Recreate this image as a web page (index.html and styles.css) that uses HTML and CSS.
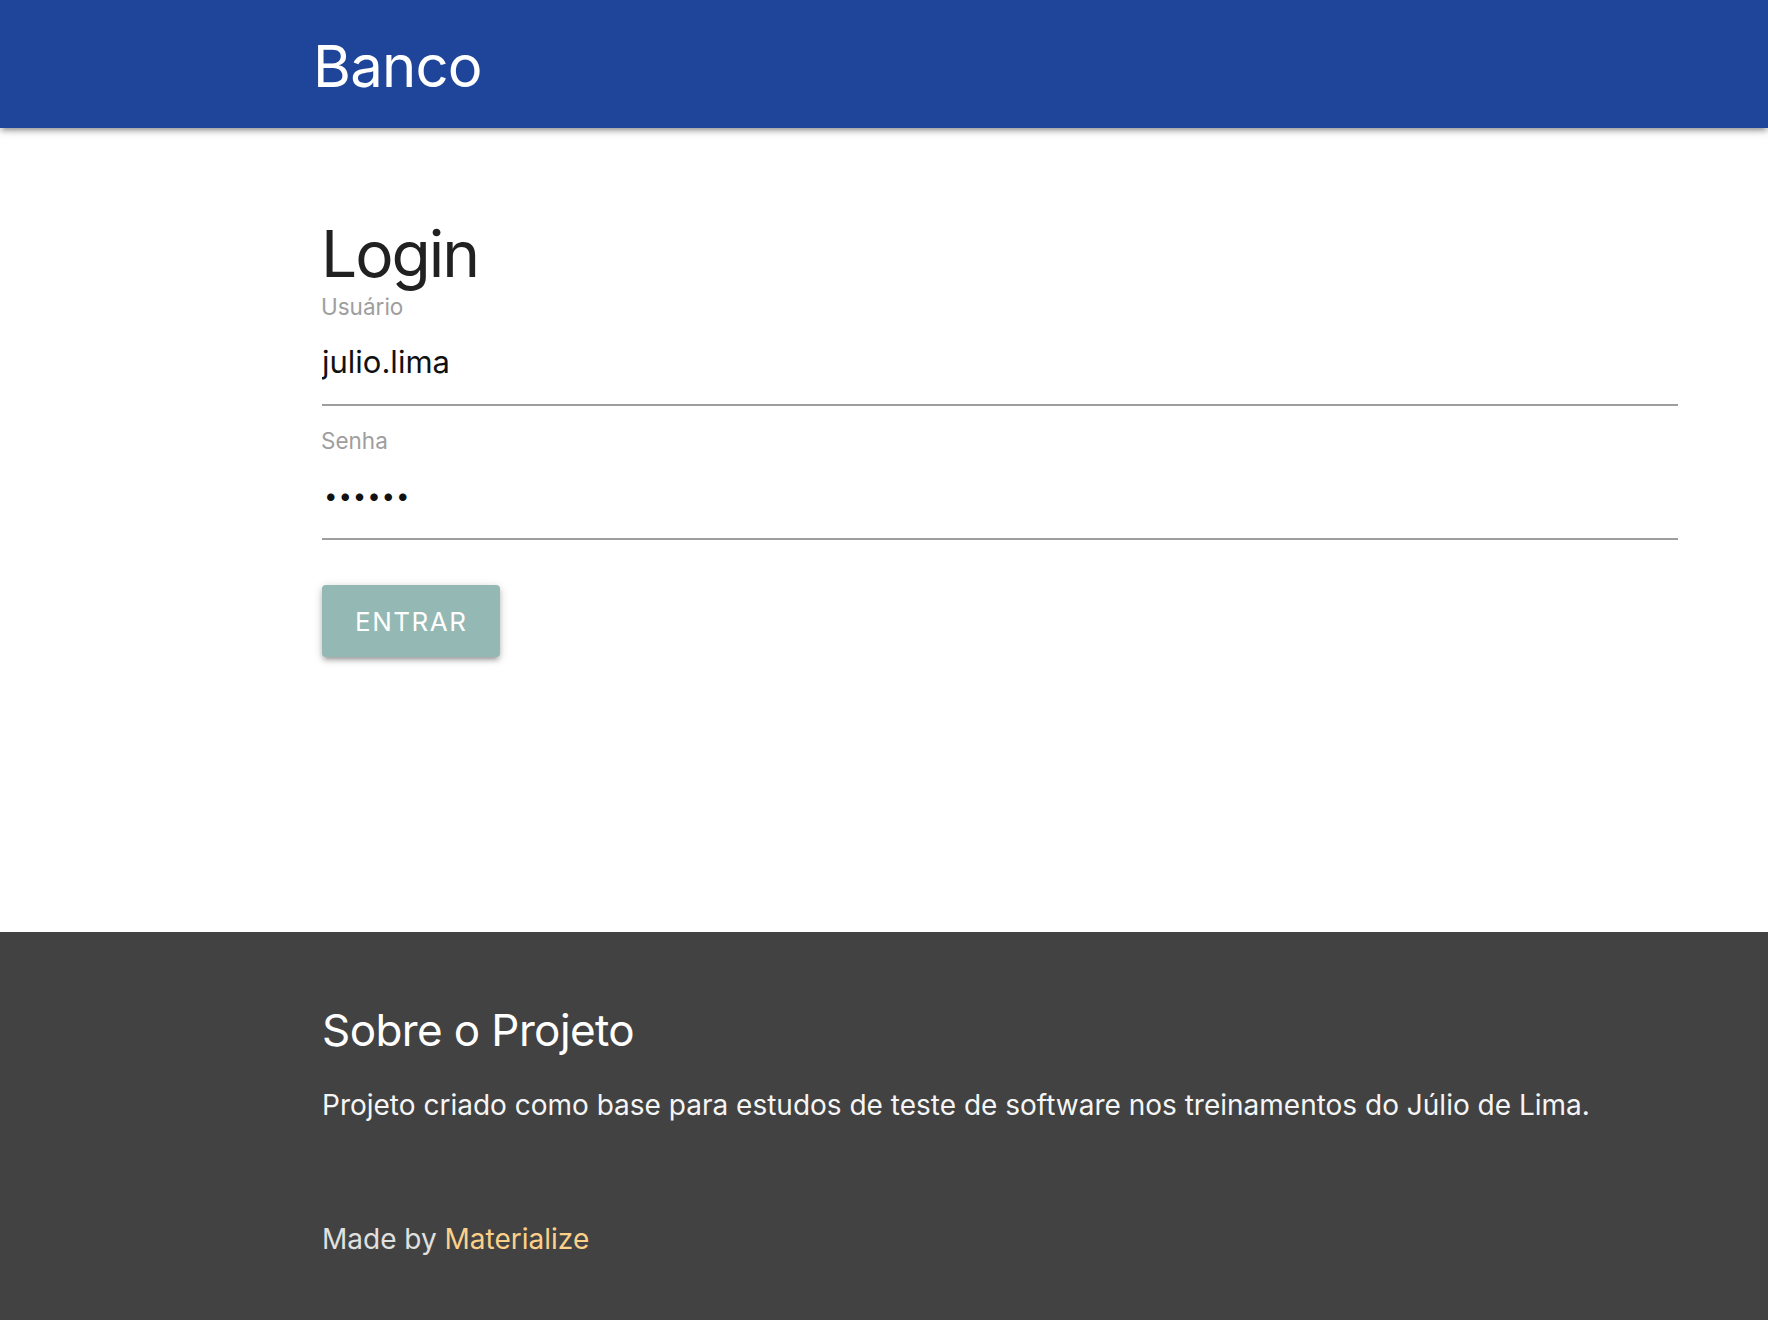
FILE: index.html
```html
<!DOCTYPE html>
<html lang="pt-BR">
<head>
<meta charset="utf-8">
<title>Banco</title>
<link rel="stylesheet" href="styles.css">
</head>
<body>
<header class="nav">
  <div class="wrap">
    <a class="brand" href="#">Banco</a>
  </div>
</header>
<main class="main">
  <div class="wrap">
    <h3 class="title">Login</h3>
    <form class="form">
      <div class="field">
        <label class="label" for="usuario">Usuário</label>
        <input class="input" id="usuario" type="text" value="julio.lima">
      </div>
      <div class="field">
        <label class="label" for="senha">Senha</label>
        <input class="input input-pass" id="senha" type="password" value="123456">
      </div>
      <button class="btn" type="button">ENTRAR</button>
    </form>
  </div>
</main>
<footer class="footer">
  <div class="wrap">
    <h5 class="f-title">Sobre o Projeto</h5>
    <p class="f-text">Projeto criado como base para estudos de teste de software nos treinamentos do Júlio de Lima.</p>
    <div class="f-copy">Made by <a class="f-link" href="#">Materialize</a></div>
  </div>
</footer>
</body>
</html>
```
FILE: styles.css
```css
* { box-sizing: border-box; }
html, body { margin: 0; padding: 0; }
body {
  font-family: Inter, "Noto Sans", "Liberation Sans", sans-serif;
  background: #fff;
  min-height: 100vh;
  display: flex;
  flex-direction: column;
}
.wrap {
  margin-left: 322px;
  width: 1356px;
}
.nav {
  height: 128px;
  background: #1f459b;
  box-shadow: 0 4px 4px 0 rgba(0,0,0,.14), 0 6px 2px -4px rgba(0,0,0,.12), 0 2px 10px 0 rgba(0,0,0,.2);
  position: relative;
  z-index: 2;
}
.brand {
  display: block;
  margin-left: -9px;
  color: #fff;
  text-decoration: none;
  font-size: 58px;
  line-height: 128px;
  padding-top: 2px;
  letter-spacing: -0.8px;
  height: 128px;
}
.main { flex: 1; }
.title {
  margin: 88px 0 0 -1px;
  font-size: 64px;
  line-height: 76px;
  font-weight: 400;
  color: #212121;
  letter-spacing: -2px;
}
.form { margin-top: 3px; }
.field { margin-bottom: 23px; }
.label {
  display: block;
  font-size: 22.5px;
  line-height: 24px;
  color: #9e9e9e;
  margin-left: -1px;
}
.input {
  display: block;
  width: 100%;
  margin-top: 24px;
  border: none;
  border-bottom: 2px solid #9e9e9e;
  outline: none;
  padding: 0 0 25px 0;
  height: 63px;
  font-family: inherit;
  font-size: 31px;
  line-height: 36px;
  color: #111;
  background: transparent;
  letter-spacing: 0;
}
.input-pass {
  font-size: 24px;
  letter-spacing: 0.9px;
  padding-left: 2px;
}
.btn {
  display: inline-flex;
  align-items: center;
  justify-content: center;
  margin-top: 22px;
  height: 72px;
  padding: 0 33px;
  border: none;
  border-radius: 4px;
  background: #94b8b3;
  color: #fff;
  font-family: inherit;
  font-size: 26px;
  letter-spacing: 1.5px;
  box-shadow: 0 4px 4px 0 rgba(0,0,0,.14), 0 6px 2px -4px rgba(0,0,0,.12), 0 2px 10px 0 rgba(0,0,0,.2);
}
.footer {
  background: #424242;
  padding: 72px 0 65px 0;
}
.f-title {
  margin: 0;
  font-size: 44px;
  line-height: 52px;
  font-weight: 400;
  color: #fff;
  letter-spacing: -0.6px;
}
.f-text {
  margin: 33px 0 0 0;
  font-size: 28px;
  line-height: 32px;
  color: #f5f5f5;
}
.f-copy {
  margin-top: 102px;
  font-size: 28px;
  line-height: 32px;
  color: #e0e0e0;
}
.f-link {
  color: #fdd08a;
  text-decoration: none;
}
```
